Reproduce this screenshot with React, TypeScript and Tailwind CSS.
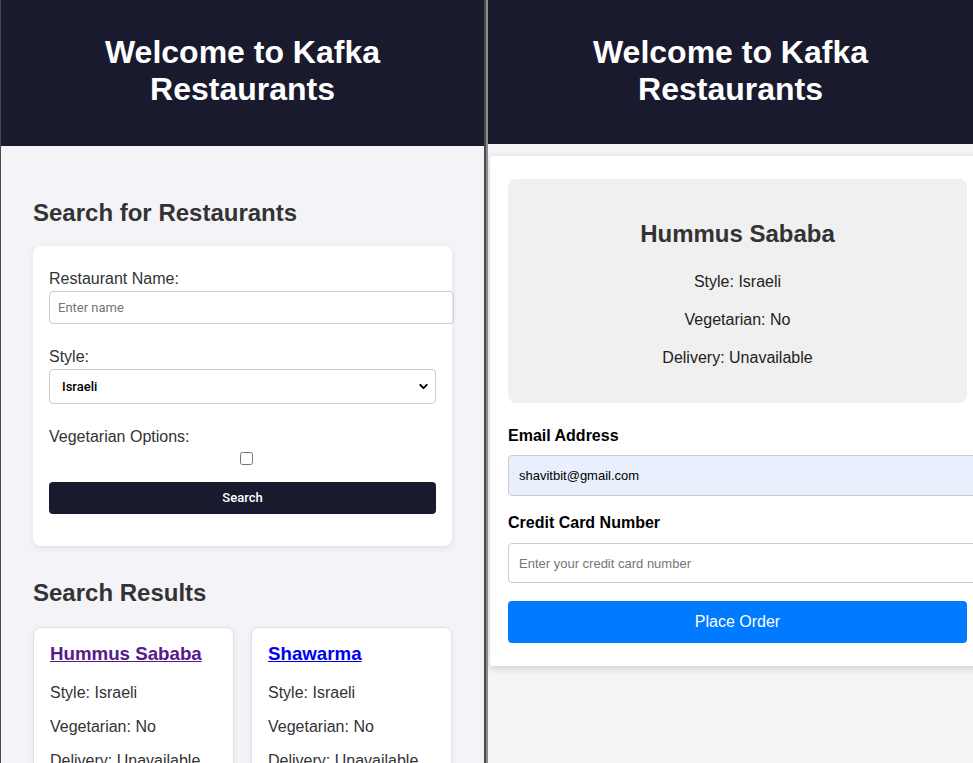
import { ChevronDown } from "lucide-react";

const results = [
  { name: "Hummus Sababa", visited: true },
  { name: "Shawarma", visited: false },
];

function Header({ height }: { height: string }) {
  return (
    <header
      className={`${height} shrink-0 bg-[#1a1a2e] pt-[34px] text-center text-[32px] font-bold leading-[37px] text-white`}
    >
      Welcome to Kafka
      <br />
      Restaurants
    </header>
  );
}

function SearchPane() {
  return (
    <div className="flex w-[484px] shrink-0 flex-col border-l border-[#4a4a4a] bg-[#f4f4f8]">
      <Header height="h-[146px]" />
      <main className="pl-[32px] pr-[32px] pt-[52px] text-[#333]">
        <h2 className="text-[24px] font-bold leading-[30px]">Search for Restaurants</h2>

        <form className="mt-[18px] rounded-[8px] bg-white px-[16px] pb-[32px] pt-[23px] shadow-[0_2px_6px_rgba(0,0,0,0.08)]">
          <label className="block text-[16px] leading-[20px]">Restaurant Name:</label>
          <input
            type="text"
            placeholder="Enter name"
            className="mt-[2px] h-[33px] w-[405px] rounded-[4px] border border-[#ccc] px-[8px] font-['Roboto',sans-serif] text-[13px] placeholder:text-[#757575]"
          />

          <label className="mt-[23px] block text-[16px] leading-[20px]">Style:</label>
          <div className="relative mt-[2px] w-[387px]">
            <select
              defaultValue="Israeli"
              className="h-[35px] w-full appearance-none rounded-[4px] border border-[#ccc] bg-white pl-[12px] font-['Roboto',sans-serif] text-[13px] font-medium text-black"
            >
              <option>Israeli</option>
              <option>Italian</option>
              <option>Japanese</option>
            </select>
            <ChevronDown
              className="pointer-events-none absolute right-[6px] top-[11px] text-black"
              size={13}
              strokeWidth={3.5}
            />
          </div>

          <label className="mt-[23px] block text-[16px] leading-[20px]">Vegetarian Options:</label>
          <div className="mt-[5px] flex h-[13px] pl-[191px]">
            <input type="checkbox" className="m-0 h-[13px] w-[13px]" />
          </div>

          <button
            type="button"
            className="mt-[17px] h-[32px] w-[387px] rounded-[4px] bg-[#1a1a2e] font-['Roboto',sans-serif] text-[13px] font-medium text-white"
          >
            Search
          </button>
        </form>

        <h2 className="mt-[32px] text-[24px] font-bold leading-[30px]">Search Results</h2>

        <div className="mt-[19px] grid grid-cols-2 gap-[17px]">
          {results.map((r) => (
            <div
              key={r.name}
              className="rounded-[8px] border border-[#e2e2e6] bg-white px-[16px] pt-[14px] pb-[16px] shadow-[0_2px_6px_rgba(0,0,0,0.06)]"
            >
              <a
                href="#"
                className={
                  r.visited
                    ? "block text-[18.72px] font-bold leading-[23px] text-[#551a8b] underline"
                    : "block text-[18.72px] font-bold leading-[23px] text-[#0000ee] underline"
                }
              >
                {r.name}
              </a>
              <p className="mt-[18px] text-[16px] leading-[20px]">Style: Israeli</p>
              <p className="mt-[14px] text-[16px] leading-[20px]">Vegetarian: No</p>
              <p className="mt-[14px] text-[16px] leading-[20px]">Delivery: Unavailable</p>
            </div>
          ))}
        </div>
      </main>
    </div>
  );
}

function OrderPane() {
  return (
    <div className="flex w-[485px] shrink-0 flex-col overflow-hidden bg-[#f4f5f7]">
      <Header height="h-[144px]" />
      <section className="ml-[2px] mt-[12px] w-[495px] shrink-0 rounded-[2px] bg-white px-[18px] pb-[23px] pt-[23px] shadow-[0_2px_8px_rgba(0,0,0,0.18)]">
        <div className="rounded-[8px] bg-[#f0f0f0] p-[18px] text-center text-[#222]">
          <h2 className="mt-[20px] mb-[20px] text-[24px] font-bold leading-[34px] text-[#333]">
            Hummus Sababa
          </h2>
          <p className="mb-[16px] text-[16px] leading-[22px]">Style: Israeli</p>
          <p className="mb-[16px] text-[16px] leading-[22px]">Vegetarian: No</p>
          <p className="mb-[16px] text-[16px] leading-[22px]">Delivery: Unavailable</p>
        </div>

        <label className="mt-[24px] block text-[16px] font-bold leading-[18px] text-black">Email Address</label>
        <input
          type="email"
          defaultValue="shavitbit@gmail.com"
          className="mt-[10px] h-[41px] w-[481px] rounded-[4px] border border-[#ccc] bg-[#e8f0fe] px-[10px] text-[13px] text-black"
        />

        <label className="mt-[18px] block text-[16px] font-bold leading-[18px] text-black">Credit Card Number</label>
        <input
          type="text"
          placeholder="Enter your credit card number"
          className="mt-[11px] h-[40px] w-[481px] rounded-[4px] border border-[#ccc] bg-white px-[10px] text-[13px] placeholder:text-[#757575]"
        />

        <button
          type="button"
          className="mt-[18px] h-[42px] w-[459px] rounded-[4px] bg-[#007bff] text-[16px] text-white"
        >
          Place Order
        </button>
      </section>
    </div>
  );
}

export default function App() {
  return (
    <div className="flex h-[763px] w-[973px] overflow-hidden bg-[#f4f4f8] font-['Liberation_Sans',Arial,sans-serif]">
      <SearchPane />
      <div className="flex w-[4px] shrink-0">
        <div className="w-[2px] bg-[#4a4a4a]" />
        <div className="w-[2px] bg-[#8c8c8c]" />
      </div>
      <OrderPane />
    </div>
  );
}
